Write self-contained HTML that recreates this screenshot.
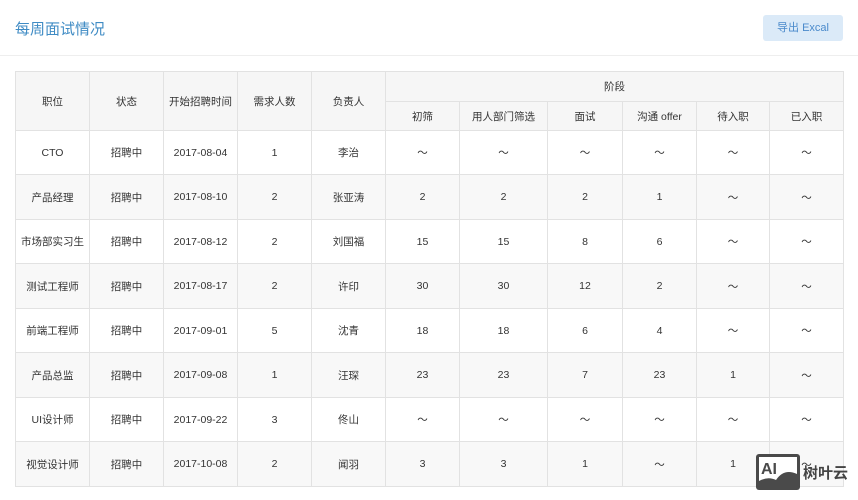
<!DOCTYPE html>
<html><head><meta charset="utf-8"><style>
body{margin:0;width:858px;height:500px;background:#fff;font-family:"Liberation Sans","Noto Sans CJK SC",sans-serif;position:relative;overflow:hidden}
.title{position:absolute;left:15px;top:18px;font-size:15px;color:#3f8bc4}
.btn{position:absolute;left:763px;top:15px;width:80px;height:26px;background:#dbeaf8;border-radius:3px;color:#4a8acb;font-size:11px;line-height:26px;text-align:center;white-space:nowrap}
.hr{position:absolute;left:0;top:55px;width:858px;height:1px;background:#eee}
table{position:absolute;left:15px;top:71px;border-collapse:collapse;font-size:10.5px;color:#333;table-layout:fixed}
td,th{border:1px solid #e2e2e2;text-align:center;font-weight:normal;padding:0;white-space:nowrap}
th{background:#f6f6f6}
tbody tr:nth-child(even) td{background:#f8f8f8}
.logo{position:absolute;left:756px;top:454px;display:flex;align-items:center}
</style></head><body>
<div class="title">每周面试情况</div>
<div class="btn">导出 Excal</div>
<div class="hr"></div>
<table>
<colgroup><col width="74"><col width="74"><col width="74"><col width="74"><col width="74"><col width="74"><col width="88"><col width="75"><col width="74"><col width="73"><col width="74"></colgroup>
<thead>
<tr style="height:30px"><th rowspan="2">职位</th><th rowspan="2">状态</th><th rowspan="2">开始招聘时间</th><th rowspan="2">需求人数</th><th rowspan="2">负责人</th><th colspan="6">阶段</th></tr>
<tr style="height:29px"><th>初筛</th><th>用人部门筛选</th><th>面试</th><th>沟通 offer</th><th>待入职</th><th>已入职</th></tr>
</thead>
<tbody>
<tr style="height:44px"><td>CTO</td><td>招聘中</td><td>2017-08-04</td><td>1</td><td>李治</td><td>～</td><td>～</td><td>～</td><td>～</td><td>～</td><td>～</td></tr>
<tr style="height:45px"><td>产品经理</td><td>招聘中</td><td>2017-08-10</td><td>2</td><td>张亚涛</td><td>2</td><td>2</td><td>2</td><td>1</td><td>～</td><td>～</td></tr>
<tr style="height:44px"><td>市场部实习生</td><td>招聘中</td><td>2017-08-12</td><td>2</td><td>刘国福</td><td>15</td><td>15</td><td>8</td><td>6</td><td>～</td><td>～</td></tr>
<tr style="height:45px"><td>测试工程师</td><td>招聘中</td><td>2017-08-17</td><td>2</td><td>许印</td><td>30</td><td>30</td><td>12</td><td>2</td><td>～</td><td>～</td></tr>
<tr style="height:44px"><td>前端工程师</td><td>招聘中</td><td>2017-09-01</td><td>5</td><td>沈青</td><td>18</td><td>18</td><td>6</td><td>4</td><td>～</td><td>～</td></tr>
<tr style="height:45px"><td>产品总监</td><td>招聘中</td><td>2017-09-08</td><td>1</td><td>汪琛</td><td>23</td><td>23</td><td>7</td><td>23</td><td>1</td><td>～</td></tr>
<tr style="height:44px"><td>UI设计师</td><td>招聘中</td><td>2017-09-22</td><td>3</td><td>佟山</td><td>～</td><td>～</td><td>～</td><td>～</td><td>～</td><td>～</td></tr>
<tr style="height:45px"><td>视觉设计师</td><td>招聘中</td><td>2017-10-08</td><td>2</td><td>闻羽</td><td>3</td><td>3</td><td>1</td><td>～</td><td>1</td><td>～</td></tr>
</tbody>
</table>
<div class="logo">
<svg width="44" height="36" viewBox="0 0 44 36"><rect x="0" y="0" width="44" height="36" rx="3" fill="#4a4a4a"/><rect x="3" y="3" width="38" height="30" fill="#fff"/><text x="5" y="20" font-family="Liberation Sans" font-weight="bold" font-size="16" fill="#4a4a4a">AI</text><path d="M3 33 L3 27 Q12 22 20 26 Q28 14 41 20 L41 33Z" fill="#4a4a4a"/></svg>
<span style="font-size:15px;color:#444;margin-left:3px;font-weight:bold">树叶云</span>
</div>
</body></html>
